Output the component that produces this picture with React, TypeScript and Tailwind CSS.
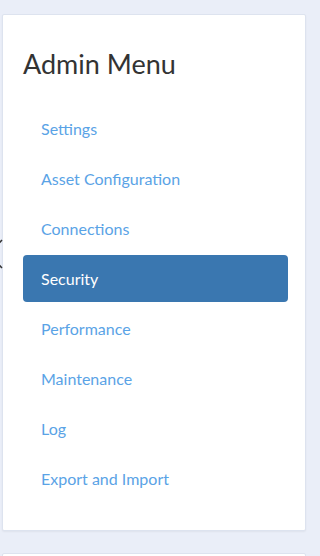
import React from "react";

const items = [
  "Settings",
  "Asset Configuration",
  "Connections",
  "Security",
  "Performance",
  "Maintenance",
  "Log",
  "Export and Import",
];

export default function App() {
  return (
    <div
      className="relative w-[320px] h-[556px] overflow-hidden bg-[#eaeef8]"
      style={{ fontFamily: "Lato, 'Open Sans', sans-serif" }}
    >
      <svg
        className="absolute left-[-14px] top-[236px]"
        width="20"
        height="36"
        viewBox="0 0 20 36"
        fill="none"
      >
        <path d="M16 4 L3 18 L16 32" stroke="#333" strokeWidth="1.5" />
      </svg>
      <div className="pt-[14px] pl-[2px] w-[306px]">
        <div className="bg-white border border-[#dde3ef] rounded-[2px] shadow-[0_1px_2px_rgba(0,0,0,0.05)] pl-[20px] pr-[17px] pt-[30px] pb-[28px]">
          <h2 className="text-[27px] leading-[38px] text-[#333333] font-normal mb-[22px]">
            Admin Menu
          </h2>
          <ul className="flex flex-col gap-[3px]">
            {items.map((it) =>
              it === "Security" ? (
                <li
                  key={it}
                  className="h-[47px] flex items-center pl-[18px] rounded-[4px] bg-[#3a77b0] text-white text-[16px]"
                >
                  {it}
                </li>
              ) : (
                <li
                  key={it}
                  className="h-[47px] flex items-center pl-[18px] text-[#5aa3e6] text-[16px]"
                >
                  {it}
                </li>
              )
            )}
          </ul>
        </div>
        <div className="mt-[22px] bg-white border border-[#dde3ef] rounded-[2px] h-[40px]" />
      </div>
    </div>
  );
}
